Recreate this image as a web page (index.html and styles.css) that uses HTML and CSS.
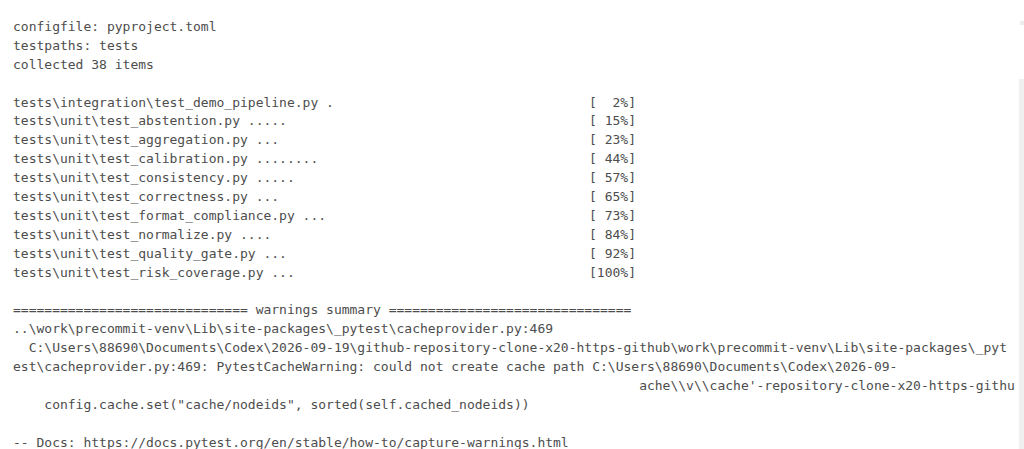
FILE: index.html
```html
<!DOCTYPE html>
<html>
<head>
<meta charset="utf-8">
<link rel="stylesheet" href="styles.css">
</head>
<body>
<div class="term">
<div class="line">configfile: pyproject.toml</div>
<div class="line">testpaths: tests</div>
<div class="line">collected 38 items</div>
<div class="line blank"></div>
<div class="row"><span>tests\integration\test_demo_pipeline.py .</span><span>[  2%]</span></div>
<div class="row"><span>tests\unit\test_abstention.py .....</span><span>[ 15%]</span></div>
<div class="row"><span>tests\unit\test_aggregation.py ...</span><span>[ 23%]</span></div>
<div class="row"><span>tests\unit\test_calibration.py ........</span><span>[ 44%]</span></div>
<div class="row"><span>tests\unit\test_consistency.py .....</span><span>[ 57%]</span></div>
<div class="row"><span>tests\unit\test_correctness.py ...</span><span>[ 65%]</span></div>
<div class="row"><span>tests\unit\test_format_compliance.py ...</span><span>[ 73%]</span></div>
<div class="row"><span>tests\unit\test_normalize.py ....</span><span>[ 84%]</span></div>
<div class="row"><span>tests\unit\test_quality_gate.py ...</span><span>[ 92%]</span></div>
<div class="row"><span>tests\unit\test_risk_coverage.py ...</span><span>[100%]</span></div>
<div class="line blank"></div>
<div class="line">============================== warnings summary ===============================</div>
<div class="line">..\work\precommit-venv\Lib\site-packages\_pytest\cacheprovider.py:469</div>
<div class="line">  C:\Users\88690\Documents\Codex\2026-09-19\github-repository-clone-x20-https-github\work\precommit-venv\Lib\site-packages\_pyt</div>
<div class="line">est\cacheprovider.py:469: PytestCacheWarning: could not create cache path C:\Users\88690\Documents\Codex\2026-09-</div>
<div class="line">                                                                                ache\\v\\cache'-repository-clone-x20-https-githu</div>
<div class="line">    config.cache.set("cache/nodeids", sorted(self.cached_nodeids))</div>
<div class="line blank"></div>
<div class="line">-- Docs: https://docs.pytest.org/en/stable/how-to/capture-warnings.html</div>
</div>
<div class="scroll-mark"></div>
<div class="scroll-track"></div>
</body>
</html>
```
FILE: styles.css
```css
html, body {
  margin: 0;
  padding: 0;
  background: #ffffff;
}
body {
  width: 1024px;
  height: 449px;
  overflow: hidden;
  position: relative;
}
.term {
  padding: 18px 0 0 13px;
  font-family: "DejaVu Sans Mono", "Liberation Mono", monospace;
  font-size: 13px;
  line-height: 18.9px;
  color: #4d4d4d;
}
.line {
  white-space: pre;
  height: 18.9px;
}
.row {
  display: flex;
  justify-content: space-between;
  width: 79.6ch;
  white-space: pre;
  height: 18.9px;
}
.scroll-mark {
  position: absolute;
  right: 0;
  top: 21px;
  width: 4px;
  height: 4px;
  background: #ececec;
}
.scroll-track {
  position: absolute;
  right: 0;
  top: 79px;
  width: 5px;
  bottom: 0;
  background: #f0f0f0;
}
```
